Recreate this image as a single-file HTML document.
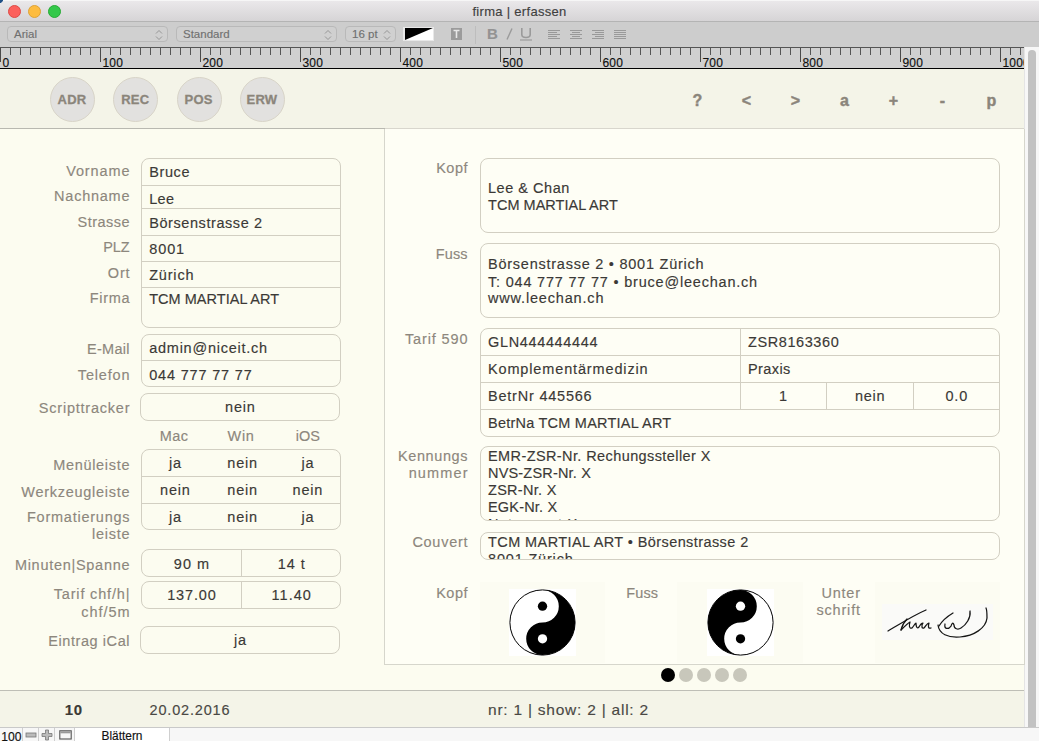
<!DOCTYPE html>
<html><head><meta charset="utf-8"><style>
html,body{margin:0;padding:0;width:1039px;height:741px;overflow:hidden;background:#fff;}
body{position:relative;font-family:"Liberation Sans", sans-serif;}
.b{position:absolute;box-sizing:content-box;}
.t{position:absolute;white-space:pre;font-family:"Liberation Sans", sans-serif;-webkit-text-stroke:0.15px currentColor;}
svg.b{display:block;}
</style></head><body>
<div class="b" style="left:0px;top:0px;width:1039px;height:21px;background:linear-gradient(#ebe9eb,#d6d4d6);"></div>
<div class="b" style="left:0px;top:0px;width:1039px;height:1px;background:#f6f6f6;"></div>
<div class="b" style="left:0px;top:21px;width:1039px;height:1px;background:#b4b4b4;"></div>
<div class="b" style="left:8px;top:5px;width:11px;height:11px;border-radius:50%;background:#fc605c;border:0.5px solid #de4a45;"></div>
<div class="b" style="left:28px;top:5px;width:11px;height:11px;border-radius:50%;background:#fdbc40;border:0.5px solid #dea236;"></div>
<div class="b" style="left:48px;top:5px;width:11px;height:11px;border-radius:50%;background:#34c84a;border:0.5px solid #27aa35;"></div>
<div class="t" style="top:4.74px;font-size:13px;line-height:13px;color:#3f3f3f;font-weight:normal;letter-spacing:0.3px;left:419.5px;width:200px;text-align:center;">firma | erfassen</div>
<div class="b" style="left:0px;top:22px;width:1039px;height:25px;background:#cdcdcd;"></div>
<div class="b" style="left:0;top:0;width:3px;height:3px;background:radial-gradient(circle at 0 0,#1f4f86 60%,transparent 75%);"></div>
<div class="b" style="left:7px;top:26px;width:159px;height:14px;border:1px solid #b9b9b9;border-radius:4px;background:#d0d0d0;"></div>
<div class="t" style="top:29.18px;font-size:11.5px;line-height:11.5px;color:#707070;font-weight:normal;letter-spacing:0px;left:14px;">Arial</div>
<svg class="b" style="left:155px;top:28.5px;" width="8" height="12"><path d="M1 4.5 L4 1.5 L7 4.5 M1 7.5 L4 10.5 L7 7.5" stroke="#8e8e8e" stroke-width="0.9" fill="none"/></svg>
<div class="b" style="left:176px;top:26px;width:159px;height:14px;border:1px solid #b9b9b9;border-radius:4px;background:#d0d0d0;"></div>
<div class="t" style="top:29.18px;font-size:11.5px;line-height:11.5px;color:#707070;font-weight:normal;letter-spacing:0px;left:183px;">Standard</div>
<svg class="b" style="left:324px;top:28.5px;" width="8" height="12"><path d="M1 4.5 L4 1.5 L7 4.5 M1 7.5 L4 10.5 L7 7.5" stroke="#8e8e8e" stroke-width="0.9" fill="none"/></svg>
<div class="b" style="left:345px;top:26px;width:49px;height:14px;border:1px solid #b9b9b9;border-radius:4px;background:#d0d0d0;"></div>
<div class="t" style="top:29.18px;font-size:11.5px;line-height:11.5px;color:#707070;font-weight:normal;letter-spacing:0px;left:352px;">16 pt</div>
<svg class="b" style="left:383px;top:28.5px;" width="8" height="12"><path d="M1 4.5 L4 1.5 L7 4.5 M1 7.5 L4 10.5 L7 7.5" stroke="#8e8e8e" stroke-width="0.9" fill="none"/></svg>
<div class="b" style="left:403px;top:27px;width:31px;height:14px;background:#e8e8e8;"></div>
<svg class="b" style="left:405px;top:28px;" width="28" height="12"><rect width="28" height="12" fill="#fff"/><path d="M0 0 H28 L0 12 Z" fill="#000"/></svg>
<svg class="b" style="left:451px;top:28px;" width="11" height="12"><rect width="11" height="12" fill="#9b9b9b"/><path d="M2.5 2.5 H8.5 M5.5 2.5 V10" stroke="#e8e8e8" stroke-width="1.6"/></svg>
<div class="b" style="left:475px;top:26px;width:1px;height:18px;background:#bdbdbd;"></div>
<div class="t" style="top:26.12px;font-size:15px;line-height:15px;color:#939393;font-weight:bold;letter-spacing:0px;left:487px;">B</div>
<svg class="b" style="left:504px;top:28px;" width="10" height="12"><path d="M8 0.5 L3 11.5" stroke="#9a9a9a" stroke-width="1.4"/></svg>
<svg class="b" style="left:520px;top:27px;" width="12" height="14"><path d="M1.8 1 V7.5 Q1.8 10.5 6 10.5 Q10.2 10.5 10.2 7.5 V1" stroke="#9a9a9a" stroke-width="1.6" fill="none"/><path d="M0 13 H12" stroke="#9a9a9a" stroke-width="1.2"/></svg>
<svg class="b" style="left:548px;top:28px;" width="13" height="12"><path d="M0 2.5 H12" stroke="#999" stroke-width="1"/><path d="M0 4.5 H9" stroke="#999" stroke-width="1"/><path d="M0 6.5 H12" stroke="#999" stroke-width="1"/><path d="M0 8.5 H9" stroke="#999" stroke-width="1"/><path d="M0 10.5 H12" stroke="#999" stroke-width="1"/></svg>
<svg class="b" style="left:570px;top:28px;" width="13" height="12"><path d="M0 2.5 H12" stroke="#999" stroke-width="1"/><path d="M2 4.5 H10" stroke="#999" stroke-width="1"/><path d="M0 6.5 H12" stroke="#999" stroke-width="1"/><path d="M2 8.5 H10" stroke="#999" stroke-width="1"/><path d="M0 10.5 H12" stroke="#999" stroke-width="1"/></svg>
<svg class="b" style="left:592px;top:28px;" width="13" height="12"><path d="M0 2.5 H12" stroke="#999" stroke-width="1"/><path d="M3 4.5 H12" stroke="#999" stroke-width="1"/><path d="M0 6.5 H12" stroke="#999" stroke-width="1"/><path d="M3 8.5 H12" stroke="#999" stroke-width="1"/><path d="M0 10.5 H12" stroke="#999" stroke-width="1"/></svg>
<svg class="b" style="left:614px;top:28px;" width="13" height="12"><path d="M0 2.5 H12" stroke="#999" stroke-width="1"/><path d="M0 4.5 H12" stroke="#999" stroke-width="1"/><path d="M0 6.5 H12" stroke="#999" stroke-width="1"/><path d="M0 8.5 H12" stroke="#999" stroke-width="1"/><path d="M0 10.5 H12" stroke="#999" stroke-width="1"/></svg>
<div class="b" style="left:0px;top:47px;width:1024px;height:22px;background:#d0d0d0;"></div>
<svg class="b" style="left:0;top:47px;" width="1024" height="23"><rect x="0" y="0" width="1024" height="1" fill="#555"/><rect x="0" y="1" width="1" height="14" fill="#4a4a4a"/><rect x="10" y="1" width="1" height="7" fill="#555"/><rect x="20" y="1" width="1" height="7" fill="#555"/><rect x="30" y="1" width="1" height="7" fill="#555"/><rect x="40" y="1" width="1" height="7" fill="#555"/><rect x="50" y="1" width="1" height="7" fill="#555"/><rect x="60" y="1" width="1" height="7" fill="#555"/><rect x="70" y="1" width="1" height="7" fill="#555"/><rect x="80" y="1" width="1" height="7" fill="#555"/><rect x="90" y="1" width="1" height="7" fill="#555"/><rect x="100" y="1" width="1" height="14" fill="#4a4a4a"/><rect x="110" y="1" width="1" height="7" fill="#555"/><rect x="120" y="1" width="1" height="7" fill="#555"/><rect x="130" y="1" width="1" height="7" fill="#555"/><rect x="140" y="1" width="1" height="7" fill="#555"/><rect x="150" y="1" width="1" height="7" fill="#555"/><rect x="160" y="1" width="1" height="7" fill="#555"/><rect x="170" y="1" width="1" height="7" fill="#555"/><rect x="180" y="1" width="1" height="7" fill="#555"/><rect x="190" y="1" width="1" height="7" fill="#555"/><rect x="200" y="1" width="1" height="14" fill="#4a4a4a"/><rect x="210" y="1" width="1" height="7" fill="#555"/><rect x="220" y="1" width="1" height="7" fill="#555"/><rect x="230" y="1" width="1" height="7" fill="#555"/><rect x="240" y="1" width="1" height="7" fill="#555"/><rect x="250" y="1" width="1" height="7" fill="#555"/><rect x="260" y="1" width="1" height="7" fill="#555"/><rect x="270" y="1" width="1" height="7" fill="#555"/><rect x="280" y="1" width="1" height="7" fill="#555"/><rect x="290" y="1" width="1" height="7" fill="#555"/><rect x="300" y="1" width="1" height="14" fill="#4a4a4a"/><rect x="310" y="1" width="1" height="7" fill="#555"/><rect x="320" y="1" width="1" height="7" fill="#555"/><rect x="330" y="1" width="1" height="7" fill="#555"/><rect x="340" y="1" width="1" height="7" fill="#555"/><rect x="350" y="1" width="1" height="7" fill="#555"/><rect x="360" y="1" width="1" height="7" fill="#555"/><rect x="370" y="1" width="1" height="7" fill="#555"/><rect x="380" y="1" width="1" height="7" fill="#555"/><rect x="390" y="1" width="1" height="7" fill="#555"/><rect x="400" y="1" width="1" height="14" fill="#4a4a4a"/><rect x="410" y="1" width="1" height="7" fill="#555"/><rect x="420" y="1" width="1" height="7" fill="#555"/><rect x="430" y="1" width="1" height="7" fill="#555"/><rect x="440" y="1" width="1" height="7" fill="#555"/><rect x="450" y="1" width="1" height="7" fill="#555"/><rect x="460" y="1" width="1" height="7" fill="#555"/><rect x="470" y="1" width="1" height="7" fill="#555"/><rect x="480" y="1" width="1" height="7" fill="#555"/><rect x="490" y="1" width="1" height="7" fill="#555"/><rect x="500" y="1" width="1" height="14" fill="#4a4a4a"/><rect x="510" y="1" width="1" height="7" fill="#555"/><rect x="520" y="1" width="1" height="7" fill="#555"/><rect x="530" y="1" width="1" height="7" fill="#555"/><rect x="540" y="1" width="1" height="7" fill="#555"/><rect x="550" y="1" width="1" height="7" fill="#555"/><rect x="560" y="1" width="1" height="7" fill="#555"/><rect x="570" y="1" width="1" height="7" fill="#555"/><rect x="580" y="1" width="1" height="7" fill="#555"/><rect x="590" y="1" width="1" height="7" fill="#555"/><rect x="600" y="1" width="1" height="14" fill="#4a4a4a"/><rect x="610" y="1" width="1" height="7" fill="#555"/><rect x="620" y="1" width="1" height="7" fill="#555"/><rect x="630" y="1" width="1" height="7" fill="#555"/><rect x="640" y="1" width="1" height="7" fill="#555"/><rect x="650" y="1" width="1" height="7" fill="#555"/><rect x="660" y="1" width="1" height="7" fill="#555"/><rect x="670" y="1" width="1" height="7" fill="#555"/><rect x="680" y="1" width="1" height="7" fill="#555"/><rect x="690" y="1" width="1" height="7" fill="#555"/><rect x="700" y="1" width="1" height="14" fill="#4a4a4a"/><rect x="710" y="1" width="1" height="7" fill="#555"/><rect x="720" y="1" width="1" height="7" fill="#555"/><rect x="730" y="1" width="1" height="7" fill="#555"/><rect x="740" y="1" width="1" height="7" fill="#555"/><rect x="750" y="1" width="1" height="7" fill="#555"/><rect x="760" y="1" width="1" height="7" fill="#555"/><rect x="770" y="1" width="1" height="7" fill="#555"/><rect x="780" y="1" width="1" height="7" fill="#555"/><rect x="790" y="1" width="1" height="7" fill="#555"/><rect x="800" y="1" width="1" height="14" fill="#4a4a4a"/><rect x="810" y="1" width="1" height="7" fill="#555"/><rect x="820" y="1" width="1" height="7" fill="#555"/><rect x="830" y="1" width="1" height="7" fill="#555"/><rect x="840" y="1" width="1" height="7" fill="#555"/><rect x="850" y="1" width="1" height="7" fill="#555"/><rect x="860" y="1" width="1" height="7" fill="#555"/><rect x="870" y="1" width="1" height="7" fill="#555"/><rect x="880" y="1" width="1" height="7" fill="#555"/><rect x="890" y="1" width="1" height="7" fill="#555"/><rect x="900" y="1" width="1" height="14" fill="#4a4a4a"/><rect x="910" y="1" width="1" height="7" fill="#555"/><rect x="920" y="1" width="1" height="7" fill="#555"/><rect x="930" y="1" width="1" height="7" fill="#555"/><rect x="940" y="1" width="1" height="7" fill="#555"/><rect x="950" y="1" width="1" height="7" fill="#555"/><rect x="960" y="1" width="1" height="7" fill="#555"/><rect x="970" y="1" width="1" height="7" fill="#555"/><rect x="980" y="1" width="1" height="7" fill="#555"/><rect x="990" y="1" width="1" height="7" fill="#555"/><rect x="1000" y="1" width="1" height="14" fill="#4a4a4a"/><rect x="1010" y="1" width="1" height="7" fill="#555"/><rect x="1020" y="1" width="1" height="7" fill="#555"/><rect x="0" y="21" width="1024" height="1.2" fill="#000"/></svg>
<div class="t" style="top:57.30px;font-size:12px;line-height:12px;color:#111;font-weight:normal;letter-spacing:0.2px;left:2.5px;">0</div>
<div class="t" style="top:57.30px;font-size:12px;line-height:12px;color:#111;font-weight:normal;letter-spacing:0.2px;left:102.5px;">100</div>
<div class="t" style="top:57.30px;font-size:12px;line-height:12px;color:#111;font-weight:normal;letter-spacing:0.2px;left:202.5px;">200</div>
<div class="t" style="top:57.30px;font-size:12px;line-height:12px;color:#111;font-weight:normal;letter-spacing:0.2px;left:302.5px;">300</div>
<div class="t" style="top:57.30px;font-size:12px;line-height:12px;color:#111;font-weight:normal;letter-spacing:0.2px;left:402.5px;">400</div>
<div class="t" style="top:57.30px;font-size:12px;line-height:12px;color:#111;font-weight:normal;letter-spacing:0.2px;left:502.5px;">500</div>
<div class="t" style="top:57.30px;font-size:12px;line-height:12px;color:#111;font-weight:normal;letter-spacing:0.2px;left:602.5px;">600</div>
<div class="t" style="top:57.30px;font-size:12px;line-height:12px;color:#111;font-weight:normal;letter-spacing:0.2px;left:702.5px;">700</div>
<div class="t" style="top:57.30px;font-size:12px;line-height:12px;color:#111;font-weight:normal;letter-spacing:0.2px;left:802.5px;">800</div>
<div class="t" style="top:57.30px;font-size:12px;line-height:12px;color:#111;font-weight:normal;letter-spacing:0.2px;left:902.5px;">900</div>
<div class="t" style="top:57.30px;font-size:12px;line-height:12px;color:#111;font-weight:normal;letter-spacing:0.2px;left:1002.5px;">1000</div>
<div class="b" style="left:1024px;top:47px;width:15px;height:680px;background:#f7f7f7;"></div>
<div class="b" style="left:1024px;top:47px;width:1px;height:680px;background:#e4e4e4;"></div>
<div class="b" style="left:1028px;top:50px;width:8px;height:677px;background:#c2c2c2;border-radius:4px 4px 0 0;"></div>
<div class="b" style="left:0px;top:69px;width:1024px;height:59px;background:#f4f4e8;"></div>
<div class="b" style="left:50.0px;top:77px;width:43px;height:43px;border-radius:50%;background:#e2e1df;border:1px solid #d8d4c8;"></div>
<div class="t" style="top:93.24px;font-size:13px;line-height:13px;color:#8b857b;font-weight:bold;letter-spacing:0.2px;left:42.0px;width:60px;text-align:center;-webkit-text-stroke:0.3px currentColor;">ADR</div>
<div class="b" style="left:113.30000000000001px;top:77px;width:43px;height:43px;border-radius:50%;background:#e2e1df;border:1px solid #d8d4c8;"></div>
<div class="t" style="top:93.24px;font-size:13px;line-height:13px;color:#8b857b;font-weight:bold;letter-spacing:0.2px;left:105.30000000000001px;width:60px;text-align:center;-webkit-text-stroke:0.3px currentColor;">REC</div>
<div class="b" style="left:176.6px;top:77px;width:43px;height:43px;border-radius:50%;background:#e2e1df;border:1px solid #d8d4c8;"></div>
<div class="t" style="top:93.24px;font-size:13px;line-height:13px;color:#8b857b;font-weight:bold;letter-spacing:0.2px;left:168.6px;width:60px;text-align:center;-webkit-text-stroke:0.3px currentColor;">POS</div>
<div class="b" style="left:239.89999999999998px;top:77px;width:43px;height:43px;border-radius:50%;background:#e2e1df;border:1px solid #d8d4c8;"></div>
<div class="t" style="top:93.24px;font-size:13px;line-height:13px;color:#8b857b;font-weight:bold;letter-spacing:0.2px;left:231.89999999999998px;width:60px;text-align:center;-webkit-text-stroke:0.3px currentColor;">ERW</div>
<div class="t" style="top:92.86px;font-size:16px;line-height:16px;color:#8b857b;font-weight:bold;letter-spacing:0px;left:682.5px;width:30px;text-align:center;-webkit-text-stroke:0.4px currentColor;">?</div>
<div class="t" style="top:92.86px;font-size:16px;line-height:16px;color:#8b857b;font-weight:bold;letter-spacing:0px;left:731.5px;width:30px;text-align:center;-webkit-text-stroke:0.4px currentColor;">&lt;</div>
<div class="t" style="top:92.86px;font-size:16px;line-height:16px;color:#8b857b;font-weight:bold;letter-spacing:0px;left:780.5px;width:30px;text-align:center;-webkit-text-stroke:0.4px currentColor;">&gt;</div>
<div class="t" style="top:92.86px;font-size:16px;line-height:16px;color:#8b857b;font-weight:bold;letter-spacing:0px;left:829.5px;width:30px;text-align:center;-webkit-text-stroke:0.4px currentColor;">a</div>
<div class="t" style="top:92.86px;font-size:16px;line-height:16px;color:#8b857b;font-weight:bold;letter-spacing:0px;left:878.5px;width:30px;text-align:center;-webkit-text-stroke:0.4px currentColor;">+</div>
<div class="t" style="top:92.86px;font-size:16px;line-height:16px;color:#8b857b;font-weight:bold;letter-spacing:0px;left:927.5px;width:30px;text-align:center;-webkit-text-stroke:0.4px currentColor;">-</div>
<div class="t" style="top:92.86px;font-size:16px;line-height:16px;color:#8b857b;font-weight:bold;letter-spacing:0px;left:976.5px;width:30px;text-align:center;-webkit-text-stroke:0.4px currentColor;">p</div>
<div class="b" style="left:0px;top:129px;width:1024px;height:561px;background:#fcfcf0;"></div>
<div class="b" style="left:384px;top:129px;width:639px;height:535px;border:1px solid #d6d6cc;border-top:none;background:#fefef5;"></div>
<div class="b" style="left:0px;top:128px;width:385px;height:1px;background:#b8b8b0;"></div>
<div class="b" style="left:385px;top:128px;width:639px;height:1px;background:#d8d6cd;"></div>
<div class="b" style="left:141px;top:158px;width:198px;height:168px;border:1px solid #d2cfc2;border-radius:8px;"></div>
<div class="b" style="left:142px;top:185px;width:198px;height:1px;background:#d2cfc2;"></div>
<div class="b" style="left:142px;top:208px;width:198px;height:1px;background:#d2cfc2;"></div>
<div class="b" style="left:142px;top:235px;width:198px;height:1px;background:#d2cfc2;"></div>
<div class="b" style="left:142px;top:261px;width:198px;height:1px;background:#d2cfc2;"></div>
<div class="b" style="left:142px;top:287px;width:198px;height:1px;background:#d2cfc2;"></div>
<div class="t" style="top:162.18px;font-size:14.49px;line-height:18px;color:#8d877d;font-weight:normal;letter-spacing:0.892px;right:908.61px;text-align:right;">Vorname</div>
<div class="t" style="top:186.98px;font-size:14.49px;line-height:18px;color:#8d877d;font-weight:normal;letter-spacing:0.767px;right:908.73px;text-align:right;">Nachname</div>
<div class="t" style="top:212.78px;font-size:14.49px;line-height:18px;color:#8d877d;font-weight:normal;letter-spacing:0.466px;right:909.03px;text-align:right;">Strasse</div>
<div class="t" style="top:237.68px;font-size:14.49px;line-height:18px;color:#8d877d;font-weight:normal;letter-spacing:-0.162px;right:909.66px;text-align:right;">PLZ</div>
<div class="t" style="top:263.98px;font-size:14.49px;line-height:18px;color:#8d877d;font-weight:normal;letter-spacing:0.763px;right:908.74px;text-align:right;">Ort</div>
<div class="t" style="top:288.58px;font-size:14.49px;line-height:18px;color:#8d877d;font-weight:normal;letter-spacing:0.664px;right:908.84px;text-align:right;">Firma</div>
<div class="t" style="top:162.98px;font-size:14.49px;line-height:18px;color:#3b3936;font-weight:normal;letter-spacing:0.616px;left:149.2px;">Bruce</div>
<div class="t" style="top:189.98px;font-size:14.49px;line-height:18px;color:#3b3936;font-weight:normal;letter-spacing:0.353px;left:149.2px;">Lee</div>
<div class="t" style="top:214.28px;font-size:14.49px;line-height:18px;color:#3b3936;font-weight:normal;letter-spacing:0.58px;left:149.2px;">Börsenstrasse 2</div>
<div class="t" style="top:239.88px;font-size:14.49px;line-height:18px;color:#3b3936;font-weight:normal;letter-spacing:0.92px;left:149.2px;">8001</div>
<div class="t" style="top:266.18px;font-size:14.49px;line-height:18px;color:#3b3936;font-weight:normal;letter-spacing:0.82px;left:149.2px;">Zürich</div>
<div class="t" style="top:289.78px;font-size:14.49px;line-height:18px;color:#3b3936;font-weight:normal;letter-spacing:0.041px;left:149.2px;">TCM MARTIAL ART</div>
<div class="b" style="left:141px;top:334px;width:198px;height:51px;border:1px solid #d2cfc2;border-radius:8px;"></div>
<div class="b" style="left:142px;top:360px;width:198px;height:1px;background:#d2cfc2;"></div>
<div class="t" style="top:340.48px;font-size:14.49px;line-height:18px;color:#8d877d;font-weight:normal;letter-spacing:0.297px;right:909.20px;text-align:right;">E-Mail</div>
<div class="t" style="top:365.58px;font-size:14.49px;line-height:18px;color:#8d877d;font-weight:normal;letter-spacing:0.824px;right:908.68px;text-align:right;">Telefon</div>
<div class="t" style="top:339.48px;font-size:14.49px;line-height:18px;color:#3b3936;font-weight:normal;letter-spacing:0.758px;left:149.2px;">admin@niceit.ch</div>
<div class="t" style="top:365.58px;font-size:14.49px;line-height:18px;color:#3b3936;font-weight:normal;letter-spacing:0.823px;left:149.2px;">044 777 77 77</div>
<div class="b" style="left:140px;top:393px;width:198px;height:26px;border:1px solid #d2cfc2;border-radius:8px;"></div>
<div class="t" style="top:398.58px;font-size:14.49px;line-height:18px;color:#8d877d;font-weight:normal;letter-spacing:0.781px;right:908.72px;text-align:right;">Scripttracker</div>
<div class="t" style="top:398.18px;font-size:14.49px;line-height:18px;color:#3b3936;font-weight:normal;letter-spacing:0.804px;left:190.40px;width:100px;text-align:center;">nein</div>
<div class="t" style="top:426.98px;font-size:14.49px;line-height:18px;color:#8d877d;font-weight:normal;letter-spacing:0.443px;left:144.22px;width:60px;text-align:center;">Mac</div>
<div class="t" style="top:426.98px;font-size:14.49px;line-height:18px;color:#8d877d;font-weight:normal;letter-spacing:0.659px;left:211.03px;width:60px;text-align:center;">Win</div>
<div class="t" style="top:426.98px;font-size:14.49px;line-height:18px;color:#8d877d;font-weight:normal;letter-spacing:-0.039px;left:277.88px;width:60px;text-align:center;">iOS</div>
<div class="b" style="left:141px;top:449px;width:198px;height:79px;border:1px solid #d2cfc2;border-radius:8px;"></div>
<div class="b" style="left:142px;top:476px;width:198px;height:1px;background:#d2cfc2;"></div>
<div class="b" style="left:142px;top:503px;width:198px;height:1px;background:#d2cfc2;"></div>
<div class="t" style="top:456.48px;font-size:14.49px;line-height:18px;color:#8d877d;font-weight:normal;letter-spacing:0.699px;right:908.80px;text-align:right;">Menüleiste</div>
<div class="t" style="top:483.48px;font-size:14.49px;line-height:18px;color:#8d877d;font-weight:normal;letter-spacing:0.724px;right:908.78px;text-align:right;">Werkzeugleiste</div>
<div class="t" style="top:508.48px;font-size:14.49px;line-height:18px;color:#8d877d;font-weight:normal;letter-spacing:0.759px;right:908.74px;text-align:right;">Formatierungs</div>
<div class="t" style="top:525.38px;font-size:14.49px;line-height:18px;color:#8d877d;font-weight:normal;letter-spacing:0.725px;right:908.77px;text-align:right;">leiste</div>
<div class="t" style="top:454.18px;font-size:14.49px;line-height:18px;color:#3b3936;font-weight:normal;letter-spacing:0.688px;left:145.34px;width:60px;text-align:center;">ja</div>
<div class="t" style="top:454.18px;font-size:14.49px;line-height:18px;color:#3b3936;font-weight:normal;letter-spacing:0.804px;left:212.60px;width:60px;text-align:center;">nein</div>
<div class="t" style="top:454.18px;font-size:14.49px;line-height:18px;color:#3b3936;font-weight:normal;letter-spacing:0.688px;left:277.84px;width:60px;text-align:center;">ja</div>
<div class="t" style="top:480.98px;font-size:14.49px;line-height:18px;color:#3b3936;font-weight:normal;letter-spacing:0.804px;left:145.40px;width:60px;text-align:center;">nein</div>
<div class="t" style="top:480.98px;font-size:14.49px;line-height:18px;color:#3b3936;font-weight:normal;letter-spacing:0.804px;left:212.60px;width:60px;text-align:center;">nein</div>
<div class="t" style="top:480.98px;font-size:14.49px;line-height:18px;color:#3b3936;font-weight:normal;letter-spacing:0.804px;left:277.90px;width:60px;text-align:center;">nein</div>
<div class="t" style="top:507.68px;font-size:14.49px;line-height:18px;color:#3b3936;font-weight:normal;letter-spacing:0.688px;left:145.34px;width:60px;text-align:center;">ja</div>
<div class="t" style="top:507.68px;font-size:14.49px;line-height:18px;color:#3b3936;font-weight:normal;letter-spacing:0.804px;left:212.60px;width:60px;text-align:center;">nein</div>
<div class="t" style="top:507.68px;font-size:14.49px;line-height:18px;color:#3b3936;font-weight:normal;letter-spacing:0.688px;left:277.84px;width:60px;text-align:center;">ja</div>
<div class="b" style="left:141px;top:549px;width:198px;height:26px;border:1px solid #d2cfc2;border-radius:8px;"></div>
<div class="b" style="left:241px;top:550px;width:1px;height:26px;background:#d2cfc2;"></div>
<div class="t" style="top:555.68px;font-size:14.49px;line-height:18px;color:#8d877d;font-weight:normal;letter-spacing:0.722px;right:908.78px;text-align:right;">Minuten|Spanne</div>
<div class="t" style="top:554.58px;font-size:14.49px;line-height:18px;color:#3b3936;font-weight:normal;letter-spacing:1.014px;left:147.01px;width:90px;text-align:center;">90 m</div>
<div class="t" style="top:554.58px;font-size:14.49px;line-height:18px;color:#3b3936;font-weight:normal;letter-spacing:0.957px;left:246.68px;width:90px;text-align:center;">14 t</div>
<div class="b" style="left:141px;top:581px;width:198px;height:26px;border:1px solid #d2cfc2;border-radius:8px;"></div>
<div class="b" style="left:241px;top:582px;width:1px;height:26px;background:#d2cfc2;"></div>
<div class="t" style="top:585.48px;font-size:14.49px;line-height:18px;color:#8d877d;font-weight:normal;letter-spacing:0.841px;right:908.66px;text-align:right;">Tarif chf/h|</div>
<div class="t" style="top:602.98px;font-size:14.49px;line-height:18px;color:#8d877d;font-weight:normal;letter-spacing:0.954px;right:908.55px;text-align:right;">chf/5m</div>
<div class="t" style="top:586.28px;font-size:14.49px;line-height:18px;color:#3b3936;font-weight:normal;letter-spacing:0.85px;left:146.93px;width:90px;text-align:center;">137.00</div>
<div class="t" style="top:586.28px;font-size:14.49px;line-height:18px;color:#3b3936;font-weight:normal;letter-spacing:1.051px;left:246.73px;width:90px;text-align:center;">11.40</div>
<div class="b" style="left:140px;top:626px;width:198px;height:26px;border:1px solid #d2cfc2;border-radius:8px;"></div>
<div class="t" style="top:632.18px;font-size:14.49px;line-height:18px;color:#8d877d;font-weight:normal;letter-spacing:0.581px;right:908.92px;text-align:right;">Eintrag iCal</div>
<div class="t" style="top:630.88px;font-size:14.49px;line-height:18px;color:#3b3936;font-weight:normal;letter-spacing:0.688px;left:210.34px;width:60px;text-align:center;">ja</div>
<div class="b" style="left:480px;top:158px;width:518px;height:73px;border:1px solid #d2cfc2;border-radius:8px;"></div>
<div class="t" style="top:159.48px;font-size:14.49px;line-height:18px;color:#8d877d;font-weight:normal;letter-spacing:0.499px;right:571.00px;text-align:right;">Kopf</div>
<div class="t" style="top:179.38px;font-size:14.49px;line-height:18px;color:#3b3936;font-weight:normal;letter-spacing:0.533px;left:488px;">Lee &amp; Chan</div>
<div class="t" style="top:196.48px;font-size:14.49px;line-height:18px;color:#3b3936;font-weight:normal;letter-spacing:0.041px;left:488px;">TCM MARTIAL ART</div>
<div class="b" style="left:480px;top:243px;width:518px;height:73px;border:1px solid #d2cfc2;border-radius:8px;"></div>
<div class="t" style="top:244.98px;font-size:14.49px;line-height:18px;color:#8d877d;font-weight:normal;letter-spacing:0.101px;right:571.40px;text-align:right;">Fuss</div>
<div class="t" style="top:255.48px;font-size:14.49px;line-height:18px;color:#3b3936;font-weight:normal;letter-spacing:0.761px;left:488px;">Börsenstrasse 2 • 8001 Zürich</div>
<div class="t" style="top:272.58px;font-size:14.49px;line-height:18px;color:#3b3936;font-weight:normal;letter-spacing:0.798px;left:488px;">T: 044 777 77 77 • bruce@leechan.ch</div>
<div class="t" style="top:288.98px;font-size:14.49px;line-height:18px;color:#3b3936;font-weight:normal;letter-spacing:0.832px;left:488px;">www.leechan.ch</div>
<div class="b" style="left:480px;top:328px;width:518px;height:107px;border:1px solid #d2cfc2;border-radius:8px;"></div>
<div class="b" style="left:481px;top:355px;width:518px;height:1px;background:#d2cfc2;"></div>
<div class="b" style="left:481px;top:382px;width:518px;height:1px;background:#d2cfc2;"></div>
<div class="b" style="left:481px;top:409px;width:518px;height:1px;background:#d2cfc2;"></div>
<div class="b" style="left:740px;top:329px;width:1px;height:80px;background:#d2cfc2;"></div>
<div class="b" style="left:826px;top:382px;width:1px;height:27px;background:#d2cfc2;"></div>
<div class="b" style="left:913px;top:382px;width:1px;height:27px;background:#d2cfc2;"></div>
<div class="t" style="top:330.48px;font-size:14.49px;line-height:18px;color:#8d877d;font-weight:normal;letter-spacing:0.875px;right:570.62px;text-align:right;">Tarif 590</div>
<div class="t" style="top:332.88px;font-size:14.49px;line-height:18px;color:#3b3936;font-weight:normal;letter-spacing:0.658px;left:488px;">GLN444444444</div>
<div class="t" style="top:332.88px;font-size:14.49px;line-height:18px;color:#3b3936;font-weight:normal;letter-spacing:0.595px;left:748px;">ZSR8163360</div>
<div class="t" style="top:359.98px;font-size:14.49px;line-height:18px;color:#3b3936;font-weight:normal;letter-spacing:0.862px;left:488px;">Komplementärmedizin</div>
<div class="t" style="top:359.98px;font-size:14.49px;line-height:18px;color:#3b3936;font-weight:normal;letter-spacing:0.406px;left:748px;">Praxis</div>
<div class="t" style="top:387.38px;font-size:14.49px;line-height:18px;color:#3b3936;font-weight:normal;letter-spacing:0.788px;left:488px;">BetrNr 445566</div>
<div class="t" style="top:387.38px;font-size:14.49px;line-height:18px;color:#3b3936;font-weight:normal;letter-spacing:0.92px;left:743.46px;width:80px;text-align:center;">1</div>
<div class="t" style="top:387.38px;font-size:14.49px;line-height:18px;color:#3b3936;font-weight:normal;letter-spacing:0.804px;left:830.20px;width:80px;text-align:center;">nein</div>
<div class="t" style="top:387.38px;font-size:14.49px;line-height:18px;color:#3b3936;font-weight:normal;letter-spacing:0.78px;left:916.79px;width:80px;text-align:center;">0.0</div>
<div class="t" style="top:413.98px;font-size:14.49px;line-height:18px;color:#3b3936;font-weight:normal;letter-spacing:0.239px;left:488px;">BetrNa TCM MARTIAL ART</div>
<div class="b" style="left:480px;top:446px;width:518px;height:73px;border:1px solid #d2cfc2;border-radius:8px;"></div>
<div class="t" style="top:447.28px;font-size:14.49px;line-height:18px;color:#8d877d;font-weight:normal;letter-spacing:0.616px;right:570.88px;text-align:right;">Kennungs</div>
<div class="t" style="top:464.28px;font-size:14.49px;line-height:18px;color:#8d877d;font-weight:normal;letter-spacing:1.147px;right:570.35px;text-align:right;">nummer</div>
<div class="b" style="left:481px;top:447px;width:518px;height:73px;overflow:hidden;border-radius:8px;"><div class="t" style="top:-0.02px;font-size:14.49px;line-height:18px;color:#3b3936;font-weight:normal;letter-spacing:0.408px;left:7px;">EMR-ZSR-Nr. Rechungssteller X</div>
<div class="t" style="top:16.98px;font-size:14.49px;line-height:18px;color:#3b3936;font-weight:normal;letter-spacing:0.186px;left:7px;">NVS-ZSR-Nr. X</div>
<div class="t" style="top:33.98px;font-size:14.49px;line-height:18px;color:#3b3936;font-weight:normal;letter-spacing:0.297px;left:7px;">ZSR-Nr. X</div>
<div class="t" style="top:50.98px;font-size:14.49px;line-height:18px;color:#3b3936;font-weight:normal;letter-spacing:0.187px;left:7px;">EGK-Nr. X</div>
<div class="t" style="top:67.98px;font-size:14.49px;line-height:18px;color:#3b3936;font-weight:normal;letter-spacing:0.716px;left:7px;">Naturaerzt X</div>
</div>
<div class="b" style="left:480px;top:532px;width:518px;height:26px;border:1px solid #d2cfc2;border-radius:8px;"></div>
<div class="t" style="top:532.98px;font-size:14.49px;line-height:18px;color:#8d877d;font-weight:normal;letter-spacing:0.731px;right:570.77px;text-align:right;">Couvert</div>
<div class="b" style="left:481px;top:533px;width:518px;height:26px;overflow:hidden;border-radius:8px;"><div class="t" style="top:-0.02px;font-size:14.49px;line-height:18px;color:#3b3936;font-weight:normal;letter-spacing:0.419px;left:7px;">TCM MARTIAL ART • Börsenstrasse 2</div>
<div class="t" style="top:16.98px;font-size:14.49px;line-height:18px;color:#3b3936;font-weight:normal;letter-spacing:0.827px;left:7px;">8001 Zürich</div>
</div>
<div class="t" style="top:584.38px;font-size:14.49px;line-height:18px;color:#8d877d;font-weight:normal;letter-spacing:0.499px;right:571.00px;text-align:right;">Kopf</div>
<div class="t" style="top:584.38px;font-size:14.49px;line-height:18px;color:#8d877d;font-weight:normal;letter-spacing:0.101px;right:380.90px;text-align:right;">Fuss</div>
<div class="t" style="top:583.98px;font-size:14.49px;line-height:18px;color:#8d877d;font-weight:normal;letter-spacing:0.775px;right:178.22px;text-align:right;">Unter</div>
<div class="t" style="top:600.98px;font-size:14.49px;line-height:18px;color:#8d877d;font-weight:normal;letter-spacing:0.811px;right:178.19px;text-align:right;">schrift</div>
<div class="b" style="left:480px;top:582px;width:125px;height:81px;background:#fcfcf2;"></div>
<div class="b" style="left:677px;top:582px;width:126px;height:81px;background:#fcfcf2;"></div>
<div class="b" style="left:875px;top:582px;width:125px;height:81px;background:#fcfcf2;"></div>
<svg class="b" style="left:509px;top:589px;" width="67" height="67"><rect width="67" height="67" fill="#fff"/><g ><circle cx="33.5" cy="33.5" r="32.6" fill="#fff" stroke="#000" stroke-width="1"/><path d="M33.5 0.8999999999999986 A32.6 32.6 0 0 1 33.5 66.1 A16.3 16.3 0 0 1 33.5 33.5 A16.3 16.3 0 0 0 33.5 0.8999999999999986 Z" fill="#000"/><circle cx="33.5" cy="17.2" r="4.6571428571428575" fill="#000"/><circle cx="33.5" cy="49.8" r="4.6571428571428575" fill="#fff"/></g></svg>
<svg class="b" style="left:707px;top:589px;" width="67" height="67"><rect width="67" height="67" fill="#fff"/><g transform="rotate(180 33.5 33.5)"><circle cx="33.5" cy="33.5" r="32.6" fill="#fff" stroke="#000" stroke-width="1"/><path d="M33.5 0.8999999999999986 A32.6 32.6 0 0 1 33.5 66.1 A16.3 16.3 0 0 1 33.5 33.5 A16.3 16.3 0 0 0 33.5 0.8999999999999986 Z" fill="#000"/><circle cx="33.5" cy="17.2" r="4.6571428571428575" fill="#000"/><circle cx="33.5" cy="49.8" r="4.6571428571428575" fill="#fff"/></g></svg>
<svg class="b" style="left:882px;top:604px;" width="111" height="36"><rect width="111" height="36" fill="#fafaf8"/><g stroke="#151515" stroke-width="1.25" fill="none" stroke-linecap="round" stroke-linejoin="round"><path d="M6 27 C15 22 30 12 44 6"/><path d="M19 26 C20 22 22 18 25 15"/><path d="M19 26 C22 23 26 19 28 18 C27 21 27 25 30 24 C32 22 33 19 34 19 C34 23 35 25 37 23 C38 21 39 19 41 19 C39 22 40 25 42 24 C44 22 45 19 47 19 C46 22 46 25 49 24"/><path d="M71 9 C66 12 60 17 57 22"/><path d="M56 21 C57 30 66 34 78 33 C92 32 104 24 105 14 C105 9 105 6 104 4"/><path d="M63 20 C62 25 66 26 69 22 C70 19 71 18 72 21 C72 25 76 26 79 24 C84 21 89 14 88 7"/></g></svg>
<div class="b" style="left:661px;top:668px;width:14px;height:14px;border-radius:50%;background:#000;"></div>
<div class="b" style="left:679px;top:668px;width:14px;height:14px;border-radius:50%;background:#c8c7bb;"></div>
<div class="b" style="left:697px;top:668px;width:14px;height:14px;border-radius:50%;background:#c8c7bb;"></div>
<div class="b" style="left:715px;top:668px;width:14px;height:14px;border-radius:50%;background:#c8c7bb;"></div>
<div class="b" style="left:733px;top:668px;width:14px;height:14px;border-radius:50%;background:#c8c7bb;"></div>
<div class="b" style="left:0px;top:690px;width:1024px;height:1px;background:#bebeb6;"></div>
<div class="b" style="left:0px;top:691px;width:1024px;height:36px;background:#f4f4e8;"></div>
<div class="t" style="top:699.80px;font-size:15.01px;line-height:19px;color:#3b3936;font-weight:bold;letter-spacing:0.6px;left:43.80px;width:60px;text-align:center;">10</div>
<div class="t" style="top:701.18px;font-size:14.49px;line-height:18px;color:#4a4844;font-weight:normal;letter-spacing:0.836px;left:149.5px;">20.02.2016</div>
<div class="t" style="top:700.12px;font-size:15.52px;line-height:19px;color:#4a4844;font-weight:normal;letter-spacing:0.763px;left:488px;">nr: 1 | show: 2 | all: 2</div>
<div class="b" style="left:0px;top:727px;width:1039px;height:14px;background:#f7f7f7;"></div>
<div class="b" style="left:0px;top:727px;width:1039px;height:1px;background:#c9c9c9;"></div>
<div class="b" style="left:22px;top:728px;width:1px;height:13px;background:#cfcfcf;"></div>
<div class="b" style="left:38px;top:728px;width:1px;height:13px;background:#cfcfcf;"></div>
<div class="b" style="left:54px;top:728px;width:1px;height:13px;background:#cfcfcf;"></div>
<div class="b" style="left:74px;top:728px;width:1px;height:13px;background:#cfcfcf;"></div>
<div class="b" style="left:169px;top:728px;width:1px;height:13px;background:#cfcfcf;"></div>
<div class="b" style="left:75px;top:728px;width:94px;height:13px;background:#fff;"></div>
<div class="t" style="top:729.60px;font-size:12.11px;line-height:15px;color:#111;font-weight:normal;letter-spacing:0px;left:1.3px;">100</div>
<svg class="b" style="left:25px;top:732px;" width="12" height="6"><rect x="1" y="1" width="10" height="4" fill="#bbb" stroke="#777" stroke-width="0.8"/></svg>
<svg class="b" style="left:41px;top:729px;" width="12" height="12"><path d="M4.5 1 H7.5 V4.5 H11 V7.5 H7.5 V11 H4.5 V7.5 H1 V4.5 H4.5 Z" fill="#bbb" stroke="#777" stroke-width="0.8"/></svg>
<svg class="b" style="left:58.5px;top:730px;" width="13" height="10"><rect x="0.8" y="0.8" width="11.4" height="8.2" fill="none" stroke="#555" stroke-width="1.1"/><rect x="1.3" y="1.3" width="10.4" height="2" fill="#999"/></svg>
<div class="t" style="top:729.38px;font-size:11.9px;line-height:15px;color:#111;font-weight:normal;letter-spacing:0px;left:77.00px;width:90px;text-align:center;">Blättern</div>

</body></html>
